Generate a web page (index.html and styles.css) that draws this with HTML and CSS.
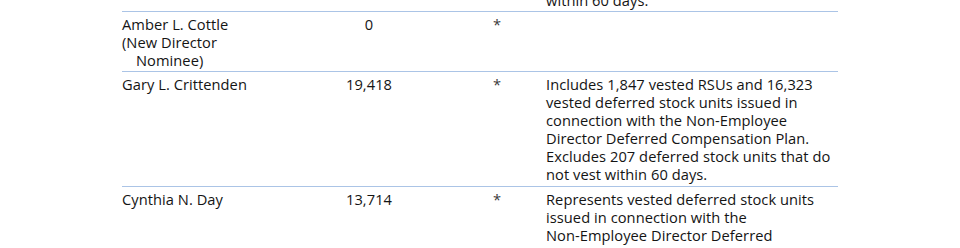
FILE: index.html
```html
<!DOCTYPE html>
<html>
<head>
<meta charset="utf-8">
<link rel="stylesheet" href="styles.css">
</head>
<body>
<div class="table">
  <div class="row">
    <div class="cell name"></div>
    <div class="cell num"></div>
    <div class="cell star"></div>
    <div class="cell desc">within 60 days.</div>
  </div>
  <div class="row">
    <div class="cell name">Amber L. Cottle<div class="hang">(New Director<br>Nominee)</div></div>
    <div class="cell num">0</div>
    <div class="cell star">*</div>
    <div class="cell desc"></div>
  </div>
  <div class="row tall">
    <div class="cell name">Gary L. Crittenden</div>
    <div class="cell num">19,418</div>
    <div class="cell star">*</div>
    <div class="cell desc">Includes 1,847 vested RSUs and 16,323<br>vested deferred stock units issued in<br>connection with the Non-Employee<br>Director Deferred Compensation Plan.<br>Excludes 207 deferred stock units that do<br>not vest within 60 days.</div>
  </div>
  <div class="row">
    <div class="cell name">Cynthia N. Day</div>
    <div class="cell num">13,714</div>
    <div class="cell star">*</div>
    <div class="cell desc">Represents vested deferred stock units<br>issued in connection with the<br>Non-Employee Director Deferred<br>Compensation Plan. Excludes 207</div>
  </div>
</div>
</body>
</html>
```
FILE: styles.css
```css
html, body {
  margin: 0;
  padding: 0;
  background: #ffffff;
}
body {
  width: 960px;
  height: 248px;
  overflow: hidden;
  font-family: "Open Sans", "Noto Sans", sans-serif;
  font-size: 14.67px;
  letter-spacing: 0.05px;
  line-height: 18px;
  color: #141414;
}
.table {
  margin: -12px 0 0 122px;
  width: 716px;
}
.row {
  display: grid;
  grid-template-columns: 168px 158px 98px 292px;
  border-top: 1px solid #abc4e6;
}
.row:first-child {
  border-top: none;
}
.cell {
  padding: 3px 0 2px;
  white-space: nowrap;
}
.tall .cell {
  padding-bottom: 3px;
}
.num, .star {
  text-align: center;
}
.star {
  color: #3a3a3a;
}
.hang {
  padding-left: 14px;
  text-indent: -14px;
}
```
